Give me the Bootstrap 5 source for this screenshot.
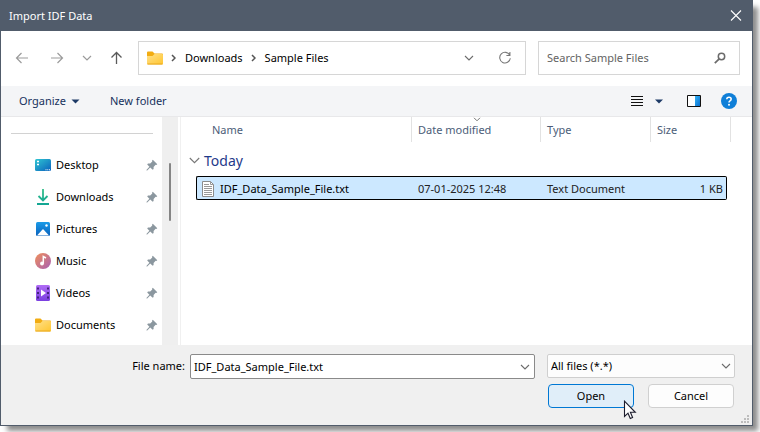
<!DOCTYPE html>
<html lang="en">
<head>
<meta charset="utf-8">
<meta name="viewport" content="width=device-width, initial-scale=1">
<title>Import IDF Data</title>
<link href="https://cdn.jsdelivr.net/npm/bootstrap@5.3.0/dist/css/bootstrap.min.css" rel="stylesheet">
<style>
  body { font-family: "Noto Sans", "Open Sans", sans-serif; font-size: 11px; line-height: 16px; color: #000; background: #fff; }
  button, input, select { font: inherit; color: inherit; }
  svg { display: block; flex: none; }
  .page { min-height: 100vh; padding: 0 7px 6px 0; }
  .dialog { border: 1px solid #515c6b; box-shadow: 6px 6px 5px -1px rgba(0,0,0,.45); background: #fff; }
  .titlebar { background: #515c6b; color: #fff; height: 30px; padding: 0 10px 0 8px; }
  .title-text { font-size: 11px; line-height: 16px; font-weight: 400; }
  .plain { background: none; border: 0; padding: 0; }
  .navrow { padding: 10px 12px 11px 13px; }
  .nav-icons { gap: 16px; width: 124px; }
  .box { border: 1px solid #d6d6d6; height: 34px; background: #fff; }
  .address { padding: 0 13px 0 8px; }
  .crumb { color: #000; text-decoration: none; margin-left: 9px; }
  .search { width: 202px; margin-left: 12px; padding: 0 13px 0 8px; }
  .search input { color: #333; }
  .search input::placeholder { color: #636363; opacity: 1; }
  .toolbar { background: #f4f5f7; border-bottom: 1px solid #e8e8ea; height: 31px; padding: 0 15px 0 18px; color: #16315c; }
  .organize { width: 61px; }
  .new-folder { margin-left: 30px; }
  .side { width: 161px; }
  .side-rule { margin: 16px 9px 15px 10px; border-top: 1px solid #d2d2d2; }
  .side-item { height: 32px; padding: 0 4px 0 34px; color: #000; text-decoration: none; gap: 5px; }
  .track { width: 16px; background: #efefef; padding-top: 46px; }
  .thumb { width: 2px; height: 58px; background: #858585; border-radius: 1px; margin-left: 7px; }
  .files { border-left: 1px solid #f0f0f0; margin-left: 2px; padding: 0 21px 0 7px; }
  .file-table { table-layout: fixed; border-collapse: separate; border-spacing: 0; width: 100%; }
  .file-table th { font-weight: 400; color: #4c5d78; height: 25px; padding: 1px 0 0 6px; border-right: 1px solid #e2e2e2; position: relative; }
  .file-table .name-head { padding-left: 24px; }
  .sort { position: absolute; top: 0; left: 61px; }
  .group-cell { height: 34px; padding-top: 4px; }
  .group-name { color: #1f3a8a; font-size: 14px; line-height: 20px; gap: 4px; }
  .picked { background: #cce8ff; border: solid #000; border-width: 1px 0; height: 24px; padding: 1px 0 0 6px; color: #222; }
  .picked-first { border-left-width: 1px; border-radius: 2px 0 0 2px; padding-left: 4px; color: #000; }
  .picked-first div { gap: 5px; }
  .picked-last { border-right-width: 1px; border-radius: 0 2px 2px 0; padding: 1px 3px 0 0; }
  .foot { background: #f0f0f0; padding: 9px 17px 17px 12px; gap: 5px; position: relative; }
  .file-label { width: 177px; padding: 4px 5px 0 0; }
  .name-box { border: 1px solid #8a8a8a; border-radius: 2px; background: #fff; height: 25px; padding: 0 4px 0 3px; }
  .type-wrap { width: 188px; margin-left: 12px; position: relative; }
  .type-wrap select { display: block; width: 100%; height: 24px; border: 1px solid #cfcfcf; border-radius: 2px; background: #fdfdfd; appearance: none; padding: 0 24px 0 3px; }
  .type-wrap svg { position: absolute; right: 4px; top: 9px; pointer-events: none; }
  .actions { gap: 14px; padding-right: 1px; }
  .act { --bs-btn-font-size: 11px; --bs-btn-padding-y: 0; --bs-btn-padding-x: 0; --bs-btn-bg: #fdfdfd; --bs-btn-color: #000; --bs-btn-border-color: #d0d0d0; --bs-btn-border-radius: 4px; width: 86px; height: 24px; line-height: 22px; }
  .act-main { --bs-btn-bg: #e0eef9; --bs-btn-border-color: #0078d4; }
  .grip { position: absolute; right: 3px; bottom: 2px; }
  .pointer { position: absolute; left: 75px; top: 16px; z-index: 2; }
</style>
<script src="https://cdn.jsdelivr.net/npm/bootstrap@5.3.0/dist/js/bootstrap.bundle.min.js"></script>
</head>
<body>
<svg width="0" height="0" class="position-absolute" aria-hidden="true">
  <defs>
    <linearGradient id="gFolder" x1="0" y1="0" x2="1" y2="1"><stop offset="0" stop-color="#ffe08a"/><stop offset="1" stop-color="#ffc630"/></linearGradient>
    <linearGradient id="gDesk" x1="0" y1="0" x2="1" y2="1"><stop offset="0" stop-color="#2fc6d2"/><stop offset="1" stop-color="#0b62bd"/></linearGradient>
    <linearGradient id="gDown" x1="0" y1="0" x2="0" y2="16" gradientUnits="userSpaceOnUse"><stop offset="0" stop-color="#35c08a"/><stop offset="1" stop-color="#12a594"/></linearGradient>
    <linearGradient id="gPic" x1="0" y1="0" x2="0" y2="1"><stop offset="0" stop-color="#1a9be8"/><stop offset="1" stop-color="#0b62bd"/></linearGradient>
    <linearGradient id="gMusic" x1="0" y1="0" x2="1" y2="1"><stop offset="0" stop-color="#f0905a"/><stop offset="1" stop-color="#a85fb4"/></linearGradient>
    <linearGradient id="gVid" x1="0" y1="0" x2="0" y2="1"><stop offset="0" stop-color="#b06cf5"/><stop offset="1" stop-color="#7a3fe0"/></linearGradient>
    <linearGradient id="gPane" x1="0" y1="0" x2="1" y2="1"><stop offset="0" stop-color="#34b3f5"/><stop offset="1" stop-color="#0a6fd0"/></linearGradient>
    <symbol id="folder" viewBox="0 0 16 14"><path d="M0 1.500Q0 .5 1 .5H5.500L7.500 2.500H15Q16 2.500 16 3.500V8H0Z" fill="#f2ac12"/><path d="M0 5H5.500L7.500 3H15Q16 3 16 4V12.500Q16 13.500 15 13.500H1Q0 13.500 0 12.500Z" fill="url(#gFolder)"/><path d="M.5 13H15.500" stroke="#e8a820" stroke-width="1"/></symbol>
    <symbol id="pin" viewBox="0 0 12 12"><path d="M6.800 .8L11.300 5.200L10.300 5.900L9.600 5.700L7.600 7.900V10L6.700 10.800L4.200 8.600L1.200 11.400L.5 11.500L.6 10.800L3.400 7.800L1.200 5.400L2 4.500L4.200 4.500L6.300 2.500L6 1.700Z" fill="#8b979f"/></symbol>
    <symbol id="down" viewBox="0 0 10 6"><path d="M1 1L5 5L9 1" fill="none" stroke="#6c6c6c" stroke-width="1.100"/></symbol>
  </defs>
</svg>
<div class="page d-flex">
  <main class="dialog flex-grow-1 d-flex flex-column">
    <header class="titlebar d-flex align-items-center justify-content-between">
      <h1 class="title-text m-0">Import IDF Data</h1>
      <button type="button" class="plain" aria-label="Close"><svg width="12" height="12" viewBox="0 0 12 12"><path d="M1 .5L11 10.500M11 .5L1 10.500" stroke="#fff" stroke-width="1.100"/></svg></button>
    </header>

    <div class="navrow d-flex align-items-center">
      <nav class="nav-icons d-flex align-items-center" aria-label="History">
        <button type="button" class="plain me-1" aria-label="Back"><svg width="16" height="14" viewBox="0 0 16 14"><path d="M14 7H2.500M7.500 2L2.500 7L7.500 12" fill="none" stroke="#9b9b9b" stroke-width="1.200"/></svg></button>
        <button type="button" class="plain" aria-label="Forward"><svg width="16" height="14" viewBox="0 0 16 14"><path d="M1 7H12.500M7.500 2L12.500 7L7.500 12" fill="none" stroke="#9b9b9b" stroke-width="1.200"/></svg></button>
        <button type="button" class="plain" aria-label="Recent locations"><svg width="10" height="6" viewBox="0 0 10 6"><path d="M1 1L5 5L9 1" fill="none" stroke="#9b9b9b" stroke-width="1.200"/></svg></button>
        <button type="button" class="plain" aria-label="Up"><svg width="17" height="14" viewBox="0 0 17 14"><path d="M8.500 13V1.500M3.500 6.500L8.500 1.500L13.500 6.500" fill="none" stroke="#5a5a5a" stroke-width="1.300"/></svg></button>
      </nav>
      <div class="box address flex-grow-1 d-flex align-items-center">
        <svg width="16" height="14"><use href="#folder"/></svg>
        <svg class="ms-2" width="5" height="8" viewBox="0 0 5 8"><path d="M1 1L4 4L1 7" fill="none" stroke="#555" stroke-width="1.500"/></svg>
        <a href="#" class="crumb">Downloads</a>
        <svg class="ms-2" width="5" height="8" viewBox="0 0 5 8"><path d="M1 1L4 4L1 7" fill="none" stroke="#555" stroke-width="1.500"/></svg>
        <a href="#" class="crumb">Sample Files</a>
        <button type="button" class="plain ms-auto" aria-label="Previous locations"><svg width="10" height="6"><use href="#down"/></svg></button>
        <button type="button" class="plain ms-4" aria-label="Refresh"><svg width="14" height="14" viewBox="0 0 14 14"><path d="M11.800 4.300A5.300 5.300 0 1 0 12.300 7.300M11.900 1V4.500H8.400" fill="none" stroke="#777" stroke-width="1.100"/></svg></button>
      </div>
      <div class="box search d-flex align-items-center">
        <input type="text" class="plain flex-grow-1 w-100" placeholder="Search Sample Files" aria-label="Search Sample Files">
        <svg width="12" height="12" viewBox="0 0 12 12"><circle cx="7.500" cy="4.500" r="3.200" fill="none" stroke="#6b6b6b" stroke-width="1.500"/><path d="M5.200 6.800L.8 11.200" stroke="#6b6b6b" stroke-width="1.700"/></svg>
      </div>
    </div>

    <div class="toolbar d-flex align-items-center">
      <button type="button" class="plain organize d-flex align-items-center justify-content-between">Organize <svg width="9" height="5" viewBox="0 0 9 5"><path d="M.5 .5H8.500L4.500 4.500Z" fill="#1d3a66"/></svg></button>
      <button type="button" class="plain new-folder">New folder</button>
      <button type="button" class="plain ms-auto" aria-label="List view"><svg width="12" height="12" viewBox="0 0 12 12"><path d="M0 1.500H12M0 4.500H12M0 7.500H12M0 10.500H12" stroke="#111"/></svg></button>
      <button type="button" class="plain ms-2 ps-1" aria-label="More views"><svg width="8" height="5" viewBox="0 0 8 5"><path d="M0 .5H8L4 4.500Z" fill="#1d3a66"/></svg></button>
      <button type="button" class="plain ms-4" aria-label="Preview pane"><svg width="14" height="12" viewBox="0 0 14 12"><path d="M.5 .5H13.500V11.500H.5Z" fill="#fff" stroke="#111"/><path d="M8 1H13V11H8Z" fill="url(#gPane)"/></svg></button>
      <button type="button" class="plain ms-3 ps-1" aria-label="Help"><svg width="16" height="16" viewBox="0 0 16 16"><circle cx="8" cy="8" r="8" fill="#0f7fd8"/><path d="M5.800 6.300Q5.800 4.200 8 4.200T10.200 6.100Q10.200 7.200 9 7.900Q8 8.500 8 9.500" fill="none" stroke="#fff" stroke-width="1.500"/><circle cx="8" cy="11.700" r="1" fill="#fff"/></svg></button>
    </div>

    <div class="d-flex flex-grow-1">
      <nav class="side flex-shrink-0" aria-label="Quick access">
        <div class="side-rule"></div>
        <a href="#" class="side-item d-flex align-items-center"><svg width="16" height="12" viewBox="0 0 16 12"><rect width="16" height="12" rx="1.500" fill="url(#gDesk)"/><path d="M2 2.500H4M2 5.500H4" stroke="#fff" stroke-width="1.600"/><path d="M10.500 10.800H11.500M12.300 10.800H13.300M14 10.800H15" stroke="#fff"/></svg><span class="flex-grow-1">Desktop</span><svg width="12" height="12"><use href="#pin"/></svg></a>
        <a href="#" class="side-item d-flex align-items-center"><svg width="16" height="16" viewBox="0 0 16 16"><path d="M8 0V11M3.500 7L8 11.500L12.500 7M2 15H14" fill="none" stroke="url(#gDown)" stroke-width="1.800"/></svg><span class="flex-grow-1">Downloads</span><svg width="12" height="12"><use href="#pin"/></svg></a>
        <a href="#" class="side-item d-flex align-items-center"><svg width="16" height="14" viewBox="0 0 16 14"><rect x="1" width="14" height="14" rx="1.500" fill="url(#gPic)"/><path d="M2 13.500L8 7L14 13.500Z" fill="#fff"/><circle cx="11.500" cy="3.500" r="1.200" fill="#fff"/></svg><span class="flex-grow-1">Pictures</span><svg width="12" height="12"><use href="#pin"/></svg></a>
        <a href="#" class="side-item d-flex align-items-center"><svg width="16" height="16" viewBox="0 0 16 16"><circle cx="8" cy="8" r="8" fill="url(#gMusic)"/><circle cx="7" cy="10.500" r="1.900" fill="#fff"/><path d="M8.300 10.500V3.500L11 5" fill="none" stroke="#fff" stroke-width="1.500"/></svg><span class="flex-grow-1">Music</span><svg width="12" height="12"><use href="#pin"/></svg></a>
        <a href="#" class="side-item d-flex align-items-center"><svg width="16" height="16" viewBox="0 0 16 16"><rect x="1" width="14" height="16" rx="1.500" fill="url(#gVid)"/><path d="M3 2.500V14M13 2.500V14" stroke="#3a2070" stroke-width="1.800" stroke-dasharray="2 2.500"/><path d="M6 4.500L11 8L6 11.500Z" fill="#fff"/></svg><span class="flex-grow-1">Videos</span><svg width="12" height="12"><use href="#pin"/></svg></a>
        <a href="#" class="side-item d-flex align-items-center"><svg width="16" height="14"><use href="#folder"/></svg><span class="flex-grow-1">Documents</span><svg width="12" height="12"><use href="#pin"/></svg></a>
      </nav>
      <div class="track flex-shrink-0"><div class="thumb"></div></div>
      <section class="files flex-grow-1" aria-label="Files">
        <table class="file-table">
          <colgroup><col style="width:8px"><col><col style="width:129px"><col style="width:110px"><col style="width:76px"><col style="width:4px"></colgroup>
          <thead>
            <tr>
              <th scope="col" colspan="2" class="name-head">Name</th>
              <th scope="col">Date modified<svg class="sort" width="8" height="5" viewBox="0 0 8 5"><path d="M1 .8L4 3.800L7 .8" fill="none" stroke="#777"/></svg></th>
              <th scope="col">Type</th>
              <th scope="col" colspan="2">Size</th>
            </tr>
          </thead>
          <tbody>
            <tr><td colspan="6" class="group-cell"><div class="group-name d-flex align-items-center"><svg width="11" height="7" viewBox="0 0 11 7"><path d="M.8 1L5.500 5.700L10.200 1" fill="none" stroke="#777" stroke-width="1.100"/></svg>Today</div></td></tr>
            <tr>
              <td></td>
              <td class="picked picked-first"><div class="d-flex align-items-center"><svg width="14" height="16" viewBox="0 0 14 16"><path d="M1.500 .5H9.500L12.500 3.500V15.500H1.500Z" fill="#fff" stroke="#8c8c8c"/><path d="M9.500 .5V3.500H12.500M3 3.500H8M3 5.500H11M3 7.500H11M3 9.500H11M3 11.500H11M3 13.500H11" fill="none" stroke="#999"/></svg>IDF_Data_Sample_File.txt</div></td>
              <td class="picked">07-01-2025 12:48</td>
              <td class="picked">Text Document</td>
              <td class="picked picked-last text-end">1 KB</td>
              <td></td>
            </tr>
          </tbody>
        </table>
      </section>
    </div>

    <form class="foot d-flex flex-column">
      <div class="d-flex align-items-start">
        <label for="fileName" class="text-end flex-shrink-0 file-label">File name:</label>
        <div class="name-box flex-grow-1 d-flex align-items-center">
          <input id="fileName" type="text" class="plain flex-grow-1" value="IDF_Data_Sample_File.txt">
          <button type="button" class="plain" aria-label="Previous names"><svg width="10" height="6"><use href="#down"/></svg></button>
        </div>
        <div class="type-wrap flex-shrink-0">
          <select aria-label="File type"><option>All files (*.*)</option></select>
          <svg width="10" height="6"><use href="#down"/></svg>
        </div>
      </div>
      <div class="actions d-flex justify-content-end">
        <div class="position-relative">
          <button type="button" class="btn act act-main">Open</button>
          <svg class="pointer" width="14" height="20" viewBox="0 0 14 20"><path d="M1.500 1.200V16.500L5 13.200L7.300 18.500L9.600 17.500L7.400 12.300H12.300Z" fill="#fff" stroke="#1c1c2c" stroke-width="1.100"/></svg>
        </div>
        <button type="button" class="btn act">Cancel</button>
      </div>
      <svg class="grip" width="8" height="8" viewBox="0 0 8 8"><path d="M6 0H8V2H6ZM3 3H5V5H3ZM6 3H8V5H6ZM0 6H2V8H0ZM3 6H5V8H3ZM6 6H8V8H6Z" fill="#bdbdbd"/></svg>
    </form>
  </main>
</div>
</body>
</html>
